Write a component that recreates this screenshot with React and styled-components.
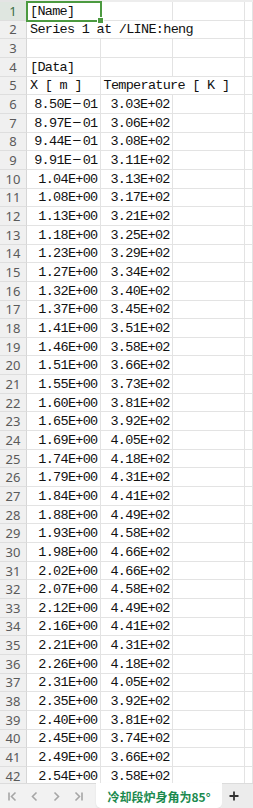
import React from "react";
import styled, { createGlobalStyle } from "styled-components";

const GlobalStyle = createGlobalStyle`
  html, body {
    margin: 0;
    padding: 0;
    background: #ffffff;
  }
  #root {
    height: 808px;
  }
`;

const data = [
  ["8.50E-01", "3.03E+02"],
  ["8.97E-01", "3.06E+02"],
  ["9.44E-01", "3.08E+02"],
  ["9.91E-01", "3.11E+02"],
  ["1.04E+00", "3.13E+02"],
  ["1.08E+00", "3.17E+02"],
  ["1.13E+00", "3.21E+02"],
  ["1.18E+00", "3.25E+02"],
  ["1.23E+00", "3.29E+02"],
  ["1.27E+00", "3.34E+02"],
  ["1.32E+00", "3.40E+02"],
  ["1.37E+00", "3.45E+02"],
  ["1.41E+00", "3.51E+02"],
  ["1.46E+00", "3.58E+02"],
  ["1.51E+00", "3.66E+02"],
  ["1.55E+00", "3.73E+02"],
  ["1.60E+00", "3.81E+02"],
  ["1.65E+00", "3.92E+02"],
  ["1.69E+00", "4.05E+02"],
  ["1.74E+00", "4.18E+02"],
  ["1.79E+00", "4.31E+02"],
  ["1.84E+00", "4.41E+02"],
  ["1.88E+00", "4.49E+02"],
  ["1.93E+00", "4.58E+02"],
  ["1.98E+00", "4.66E+02"],
  ["2.02E+00", "4.66E+02"],
  ["2.07E+00", "4.58E+02"],
  ["2.12E+00", "4.49E+02"],
  ["2.16E+00", "4.41E+02"],
  ["2.21E+00", "4.31E+02"],
  ["2.26E+00", "4.18E+02"],
  ["2.31E+00", "4.05E+02"],
  ["2.35E+00", "3.92E+02"],
  ["2.40E+00", "3.81E+02"],
  ["2.45E+00", "3.74E+02"],
  ["2.49E+00", "3.66E+02"],
  ["2.54E+00", "3.58E+02"],
];

// renders a number, the minus sign is wider like in the original sheet font
const NumText = ({ value }) => {
  const parts = value.split("-");
  if (parts.length === 1) return value;
  return (
    <>
      {parts[0]}
      <Minus>−</Minus>
      {parts[1]}
    </>
  );
};

const App = () => {
  const textRows = [
    { n: 1, cells: [{ text: "[Name]", span: 1 }], selected: true },
    { n: 2, cells: [{ text: "Series 1 at /LINE:heng", span: 3 }] },
    { n: 3, cells: [] },
    { n: 4, cells: [{ text: "[Data]", span: 1 }] },
    {
      n: 5,
      cells: [
        { text: "X [ m ]", span: 1 },
        { text: "Temperature [ K ]", span: 2 },
      ],
    },
  ];

  const renderFill = (used) => {
    const rest = [];
    for (let i = used; i < 3; i++) rest.push(<Cell key={"f" + i} />);
    return rest;
  };

  return (
    <>
      <GlobalStyle />
      <Page>
        <Sheet>
          <TopEdge />
          {textRows.map((row) => {
            let used = 0;
            return (
              <Row key={row.n}>
                <RowHead $active={row.selected}>{row.n}</RowHead>
                {row.cells.map((c, i) => {
                  used += c.span;
                  return (
                    <Cell key={i} $span={c.span} $selected={row.selected}>
                      {c.text}
                      {row.selected && <Handle />}
                    </Cell>
                  );
                })}
                {renderFill(used)}
                <Cell />
              </Row>
            );
          })}
          {data.map(([x, t], i) => (
            <Row key={i}>
              <RowHead>{i + 6}</RowHead>
              <Cell $right>
                <NumText value={x} />
              </Cell>
              <Cell $right>
                <NumText value={t} />
              </Cell>
              <Cell />
              <Cell />
            </Row>
          ))}
        </Sheet>
        <TabBar>
          <NavGroup>
            <NavButton>
              <svg width="11" height="11" viewBox="0 0 11 11">
                <path d="M2 1.5v8M8.5 1.5L4.5 5.5l4 4" fill="none" stroke="#a6a6a6" strokeWidth="1.6" />
              </svg>
            </NavButton>
            <NavButton>
              <svg width="11" height="11" viewBox="0 0 11 11">
                <path d="M7.5 1.5L3.5 5.5l4 4" fill="none" stroke="#a6a6a6" strokeWidth="1.6" />
              </svg>
            </NavButton>
            <NavButton>
              <svg width="11" height="11" viewBox="0 0 11 11">
                <path d="M3.5 1.5l4 4-4 4" fill="none" stroke="#a6a6a6" strokeWidth="1.6" />
              </svg>
            </NavButton>
            <NavButton>
              <svg width="11" height="11" viewBox="0 0 11 11">
                <path d="M2.5 1.5l4 4-4 4M9 1.5v8" fill="none" stroke="#a6a6a6" strokeWidth="1.6" />
              </svg>
            </NavButton>
          </NavGroup>
          <SheetTab>冷却段炉身角为85°</SheetTab>
          <AddArea>
            <AddButton>
              <svg width="10" height="10" viewBox="0 0 10 10">
                <path d="M5 0.5v9M0.5 5h9" stroke="#333" strokeWidth="1.8" />
              </svg>
            </AddButton>
          </AddArea>
        </TabBar>
      </Page>
    </>
  );
};

const Page = styled.div`
  display: flex;
  flex-direction: column;
  width: 253px;
  height: 808px;
  overflow: hidden;
`;

const Sheet = styled.div`
  flex: 1;
  overflow: hidden;
  min-height: 0;
`;

const TopEdge = styled.div`
  height: 2px;
  background: linear-gradient(to right, #e4e4e4 27px, #ededed 27px);
`;

const Row = styled.div`
  display: grid;
  grid-template-columns: 27px 73.5px 72.2px 72.3px 1fr;
  height: 18.66px;
`;

const RowHead = styled.div`
  display: flex;
  align-items: center;
  justify-content: center;
  background: ${(p) => (p.$active ? "#dfe6e0" : "#f0f0f0")};
  color: ${(p) => (p.$active ? "#3b6e46" : "#5a5a5a")};
  border-right: 1px solid #d6d6d6;
  border-bottom: 1px solid #dedede;
  font-family: "Noto Sans", "Liberation Sans", sans-serif;
  font-size: 13px;
  line-height: 1;
  padding-top: 1px;
  box-sizing: border-box;
`;

const Cell = styled.div`
  position: relative;
  grid-column: span ${(p) => p.$span || 1};
  display: flex;
  align-items: center;
  justify-content: ${(p) => (p.$right ? "flex-end" : "flex-start")};
  padding: 1px ${(p) => (p.$right ? "2px" : "0")} 0 ${(p) => (p.$right ? "0" : "3px")};
  border-right: 1px solid #e3e3e3;
  border-bottom: 1px solid #e3e3e3;
  box-sizing: border-box;
  font-family: "Liberation Mono", "Noto Sans CJK SC", monospace;
  font-size: 13.5px;
  letter-spacing: -0.7px;
  color: #111111;
  white-space: nowrap;
  overflow: visible;
  ${(p) =>
    p.$selected &&
    `
    outline: 2px solid #4c9a40;
    outline-offset: -1px;
    z-index: 2;
  `}
`;

const Handle = styled.span`
  position: absolute;
  right: -4px;
  bottom: -4px;
  width: 5px;
  height: 5px;
  background: #4c9a40;
  border: 1px solid #ffffff;
`;

const Minus = styled.span`
  display: inline-block;
  width: 11.5px;
  text-align: center;
  letter-spacing: 0;
  transform: scaleX(1.15);
`;

const TabBar = styled.div`
  display: flex;
  align-items: stretch;
  height: 25px;
  flex-shrink: 0;
  background: #f2f2f2;
  border-top: 1px solid #dcdcdc;
  box-sizing: border-box;
`;

const NavGroup = styled.div`
  display: flex;
  align-items: center;
  padding-left: 7px;
  gap: 11px;
  width: 96px;
  box-sizing: border-box;
`;

const NavButton = styled.span`
  display: flex;
  align-items: center;
  justify-content: center;
  width: 11px;
  height: 11px;
`;

const SheetTab = styled.div`
  width: 126px;
  margin-top: -1px;
  display: flex;
  align-items: center;
  justify-content: center;
  background: #ffffff;
  border-radius: 0 0 5px 5px;
  box-shadow: 0 1px 2px rgba(0, 0, 0, 0.08);
  color: #1b8a4e;
  font-family: "Noto Sans CJK SC", "Noto Sans", sans-serif;
  font-weight: 700;
  font-size: 12px;
  padding-top: 1px;
`;

const AddArea = styled.div`
  flex: 1;
  display: flex;
  align-items: center;
  padding-left: 7px;
  background: #ececec;
`;

const AddButton = styled.span`
  display: flex;
  align-items: center;
  justify-content: center;
  width: 10px;
  height: 10px;
`;

export default App;
